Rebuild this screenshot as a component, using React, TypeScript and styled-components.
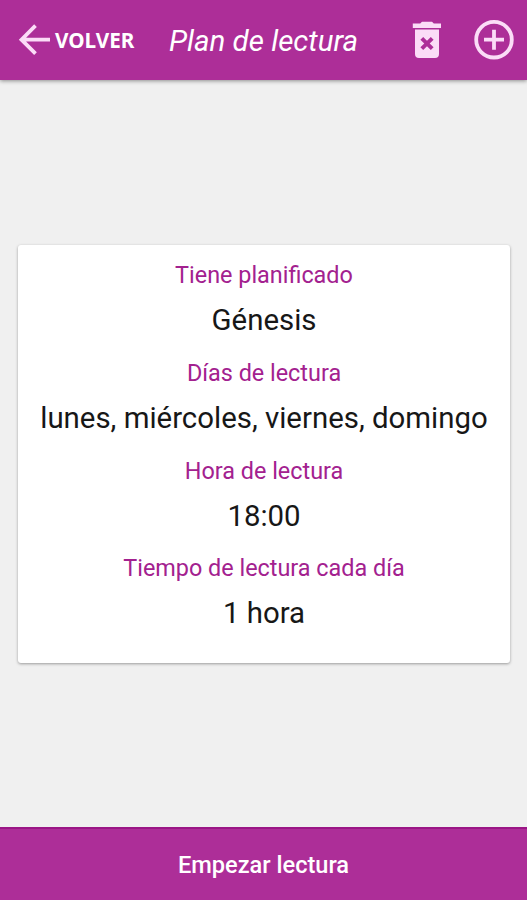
import React from "react";
import styled, { createGlobalStyle } from "styled-components";

const GlobalStyle = createGlobalStyle`
  * { box-sizing: border-box; }
  body { margin: 0; background: #f0f0f0; font-family: Roboto, sans-serif; }
  button { font: inherit; color: inherit; background: none; border: 0; padding: 0; cursor: pointer; }
`;

const Screen = styled.div`
  display: flex;
  flex-direction: column;
  height: 100vh;
  min-height: 900px;
  overflow: hidden;
`;

const Toolbar = styled.header`
  flex: none;
  display: flex;
  align-items: center;
  height: 80px;
  padding: 0 13px 0 18px;
  background: #ad2e98;
  color: #fff;
  box-shadow: 0 1px 4px rgba(0, 0, 0, 0.42);
`;

const BackButton = styled.button`
  display: flex;
  align-items: center;
  width: 151px;
`;

const BackLabel = styled.span`
  margin-left: 5px;
  font: 700 22px/26px "Noto Sans", sans-serif;
  transform: translateY(-1.5px) scaleX(0.94);
  transform-origin: left;
`;

const Title = styled.h1`
  flex: 1;
  margin: 1px 0 0;
  font-size: 29.5px;
  line-height: 36px;
  font-style: italic;
  font-weight: 400;
  white-space: nowrap;
`;

const Actions = styled.div`
  display: flex;
  align-items: center;
  gap: 32px;
`;

const IconButton = styled.button`
  display: flex;
`;

const Icon = styled.svg`
  display: block;
  flex: none;
`;

const Content = styled.main`
  flex: 1;
  display: flex;
  align-items: center;
  padding: 0 17px 0 18px;
`;

const Card = styled.dl`
  flex: 1;
  height: 418px;
  margin: 0;
  padding-top: 8.7px;
  background: #fff;
  border-radius: 3px;
  box-shadow: 0 1px 3px rgba(0, 0, 0, 0.36);
  text-align: center;
  white-space: nowrap;
`;

const Entry = styled.div`
  height: 97.7px;
`;

const Label = styled.dt`
  font-size: 23.4px;
  line-height: 45px;
  color: #a3218f;
`;

const Value = styled.dd`
  margin: 0;
  font-size: 29.4px;
  line-height: 45px;
  color: #171717;
`;

const StartButton = styled.button`
  && {
    flex: none;
    height: 73px;
    padding-top: 1px;
    background: #ad2e98;
    border-top: 2px solid #9b1686;
    color: #fff;
    font-size: 23.6px;
    font-weight: 500;
  }
`;

const entries = [
  { label: "Tiene planificado", value: "Génesis" },
  { label: "Días de lectura", value: "lunes, miércoles, viernes, domingo" },
  { label: "Hora de lectura", value: "18:00" },
  { label: "Tiempo de lectura cada día", value: "1 hora" },
];

export default function App() {
  return (
    <>
      <GlobalStyle />
      <Screen>
        <Toolbar>
          <BackButton>
            <Icon width="32" height="32" viewBox="0 0 32 32" fill="none" stroke="#fbdcf7" strokeWidth="3.8">
              <path d="M32 15.7H4M17.5 1.7L3.5 15.7L17.5 29.7" />
            </Icon>
            <BackLabel>VOLVER</BackLabel>
          </BackButton>
          <Title>Plan de lectura</Title>
          <Actions>
            <IconButton aria-label="Eliminar">
              <Icon width="30" height="38" viewBox="0 0 30 38" fill="#fbdcf7">
                <path d="M0.8 2.5H8.2L10 0.8H20L21.8 2.5H29V7H0.8Z" />
                <path fillRule="evenodd" d="M3 8.5H27V33Q27 37 23 37H7Q3 37 3 33ZM11.2 16L8.4 18.8L12.3 22.5L8.4 26.2L11.2 29L15 25.3L18.8 29L21.6 26.2L17.7 22.5L21.6 18.8L18.8 16L15 19.7Z" />
              </Icon>
            </IconButton>
            <IconButton aria-label="Añadir">
              <Icon width="40" height="40" viewBox="0 0 40 40" fill="none" stroke="#fbdcf7" strokeWidth="3.8">
                <circle cx="20" cy="19.7" r="17.8" />
                <path d="M20 9.7V29.7M10 19.7H30" />
              </Icon>
            </IconButton>
          </Actions>
        </Toolbar>
        <Content>
          <Card>
            {entries.map((entry) => (
              <Entry key={entry.label}>
                <Label>{entry.label}</Label>
                <Value>{entry.value}</Value>
              </Entry>
            ))}
          </Card>
        </Content>
        <StartButton>Empezar lectura</StartButton>
      </Screen>
    </>
  );
}
